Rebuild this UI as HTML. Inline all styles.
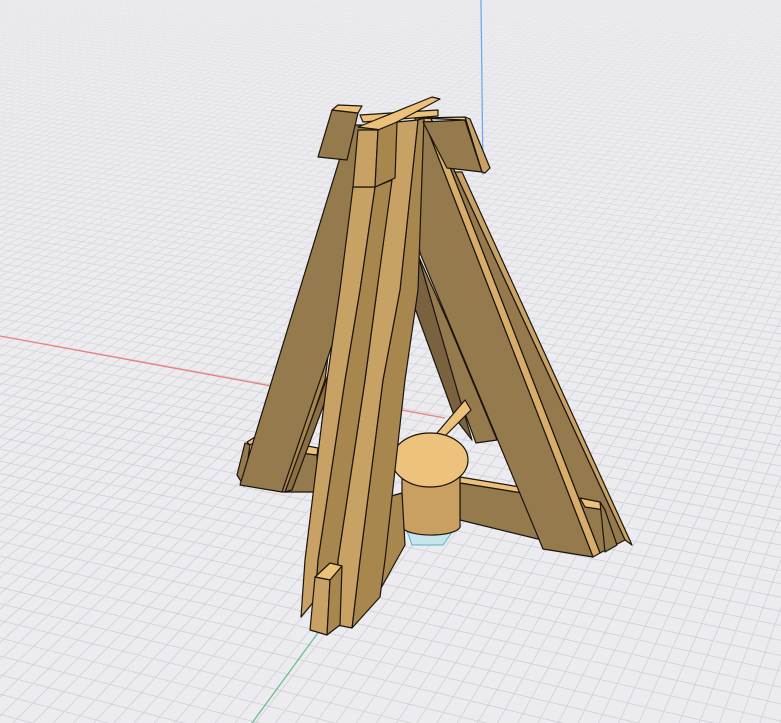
<!DOCTYPE html>
<html><head><meta charset="utf-8"><style>
html,body{margin:0;padding:0;background:#ececf0;width:781px;height:723px;overflow:hidden;position:relative}
svg{position:absolute;left:0;top:0;overflow:hidden}
</style></head><body>
<svg id="g" width="781" height="723" viewBox="0 0 781 723"></svg>
<svg width="781" height="723" viewBox="0 0 781 723" style="stroke:#1a140c;stroke-width:1.2;stroke-linejoin:round">
<defs>
<linearGradient id="fade" x1="0" y1="0" x2="0" y2="1">
<stop offset="0" stop-color="#ececf0" stop-opacity="0.85"/>
<stop offset="0.35" stop-color="#ececf0" stop-opacity="0.3"/>
<stop offset="0.6" stop-color="#ececf0" stop-opacity="0"/>
</linearGradient>
</defs>
<rect x="0" y="0" width="781" height="723" fill="url(#fade)" stroke="none"/>
<line x1="0" y1="336" x2="445" y2="418" stroke="#e88080" stroke-width="1.3"/>
<line x1="481" y1="0" x2="483" y2="175" stroke="#6fa8ee" stroke-width="1.3"/>
<line x1="320" y1="630" x2="252" y2="723" stroke="#6cc08a" stroke-width="1.3"/>
<polygon points="405,525 455,528 443,545 412,545" fill="#c6e6ee" stroke="#5ab0c8" stroke-width="1"/>

<polygon points="412,300 418,255 472,440 455,418" fill="#7a6240"/>
<polygon points="418,255 447,320 497,440 476,443 460,400" fill="#957a4e"/>
<polygon points="437,433 465,400 471,410 443,438" fill="#ecc27b"/>

<polygon points="460,477 520,487 522,493 460,483" fill="#ecc27b"/>
<polygon points="460,483 522,493 542,540 460,520" fill="#957a4e"/>

<polygon points="455,172 462,172 632,545 625,540" fill="#c8a165"/>
<polygon points="430,116 455,172 625,540 600,553" fill="#957a4e"/>
<polygon points="423,118 430,116 600,553 593,557" fill="#d8ad6a"/>
<polygon points="415,118 423,118 593,557 543,549 420,253 418,240" fill="#957a4e"/>
<polygon points="580,498 600,502 605,510 585,507" fill="#ecc27b"/>
<polygon points="600,502 605,510 617,545 605,552" fill="#957a4e"/>

<path d="M402,460 L402,527 A29,9 0 0 0 460,525 L460,460 Z" fill="#c9a062"/>
<ellipse cx="430" cy="460" rx="38" ry="27" fill="#edc27c"/>

<polygon points="300,453 317,455 318,492 285,492" fill="#957a4e"/>
<polygon points="302,445 318,448 317,455 300,453" fill="#ecc27b"/>
<polygon points="247,442 255,437 258,440 250,445" fill="#ecc27b"/>
<polygon points="245,443 250,445 244,486 237,475" fill="#957a4e"/>
<polygon points="290,330 335,300 325,380 287,492 282,492" fill="#a8874f"/>
<polygon points="350,125 407,125 282,492 240,485" fill="#957a4e"/>
<polygon points="392,200 400,200 292,490 285,492" fill="#8a6f45"/>

<polygon points="388,497 402,493 405,545 380,590" fill="#a8874f"/>

<polygon points="418,120 424,118 418,290 405,380 385,560 380,597 352,628 360,560 383,380 400,290" fill="#a8874f"/>
<polygon points="397,122 418,120 400,290 383,380 360,560 352,628 337,625 338,560 365,380 377,290 390,180" fill="#c8a165"/>
<polygon points="375,187 392,180 377,290 365,380 338,560 335,600 315,600 318,560 345,380 360,290" fill="#a8874f"/>
<polygon points="353,187 375,187 360,290 345,380 318,560 315,600 301,617 305,560 327,380 340,290" fill="#c8a165"/>
<polygon points="315,577 330,580 342,566 330,563" fill="#ecc27b"/>
<polygon points="315,577 330,580 327,635 310,630" fill="#c8a165"/>
<polygon points="330,580 342,566 340,625 327,635" fill="#a8874f"/>

<polygon points="332,110 358,113 347,160 318,157" fill="#957a4e"/>
<polygon points="332,110 338,105 362,106 358,113" fill="#ecc27b"/>
<polygon points="423,122 465,120 482,172 447,168" fill="#957a4e"/>
<polygon points="465,117 470,119 490,168 485,173 482,172" fill="#c8a165"/>
<polygon points="420,118 465,117 482,172 465,120" fill="#ecc27b"/>

<polygon points="360,115 438,110 438,116 363,122" fill="#ecc27b"/>
<polygon points="358,127 382,130 440,99 432,97" fill="#ecc27b"/>
<polygon points="358,130 378,130 375,187 353,187" fill="#c8a165"/>
<polygon points="378,130 397,122 395,178 375,187" fill="#a8874f"/>
</svg>
<script>
(function(){
var svg=document.getElementById('g');
var O=[440,415],V1=[-4090,-400],V2=[1143,-400];
var k1=0.0028,k2=0.0105;
function P(u,v){var x=O[0]+u*k1*V1[0]+v*k2*V2[0],y=O[1]+u*k1*V1[1]+v*k2*V2[1],z=1+u*k1+v*k2;return [x/z,y/z,z];}
var s='';
function seg(a,b){if(a[2]<=0||b[2]<=0)return;s+='M'+a[0].toFixed(1)+','+a[1].toFixed(1)+'L'+b[0].toFixed(1)+','+b[1].toFixed(1);}
for(var i=-400;i<=1500;i++){var vmin=(0.02-1-i*k1)/k2; seg(P(i,vmin),P(i,vmin+4000));}
for(var j=-200;j<=600;j++){var umin=(0.02-1-j*k2)/k1; seg(P(umin,j),P(umin+15000,j));}
var p=document.createElementNS('http://www.w3.org/2000/svg','path');
p.setAttribute('d',s);p.setAttribute('stroke','#cfcfd5');p.setAttribute('stroke-width','0.8');p.setAttribute('fill','none');
svg.appendChild(p);
})();
</script>
</body></html>
